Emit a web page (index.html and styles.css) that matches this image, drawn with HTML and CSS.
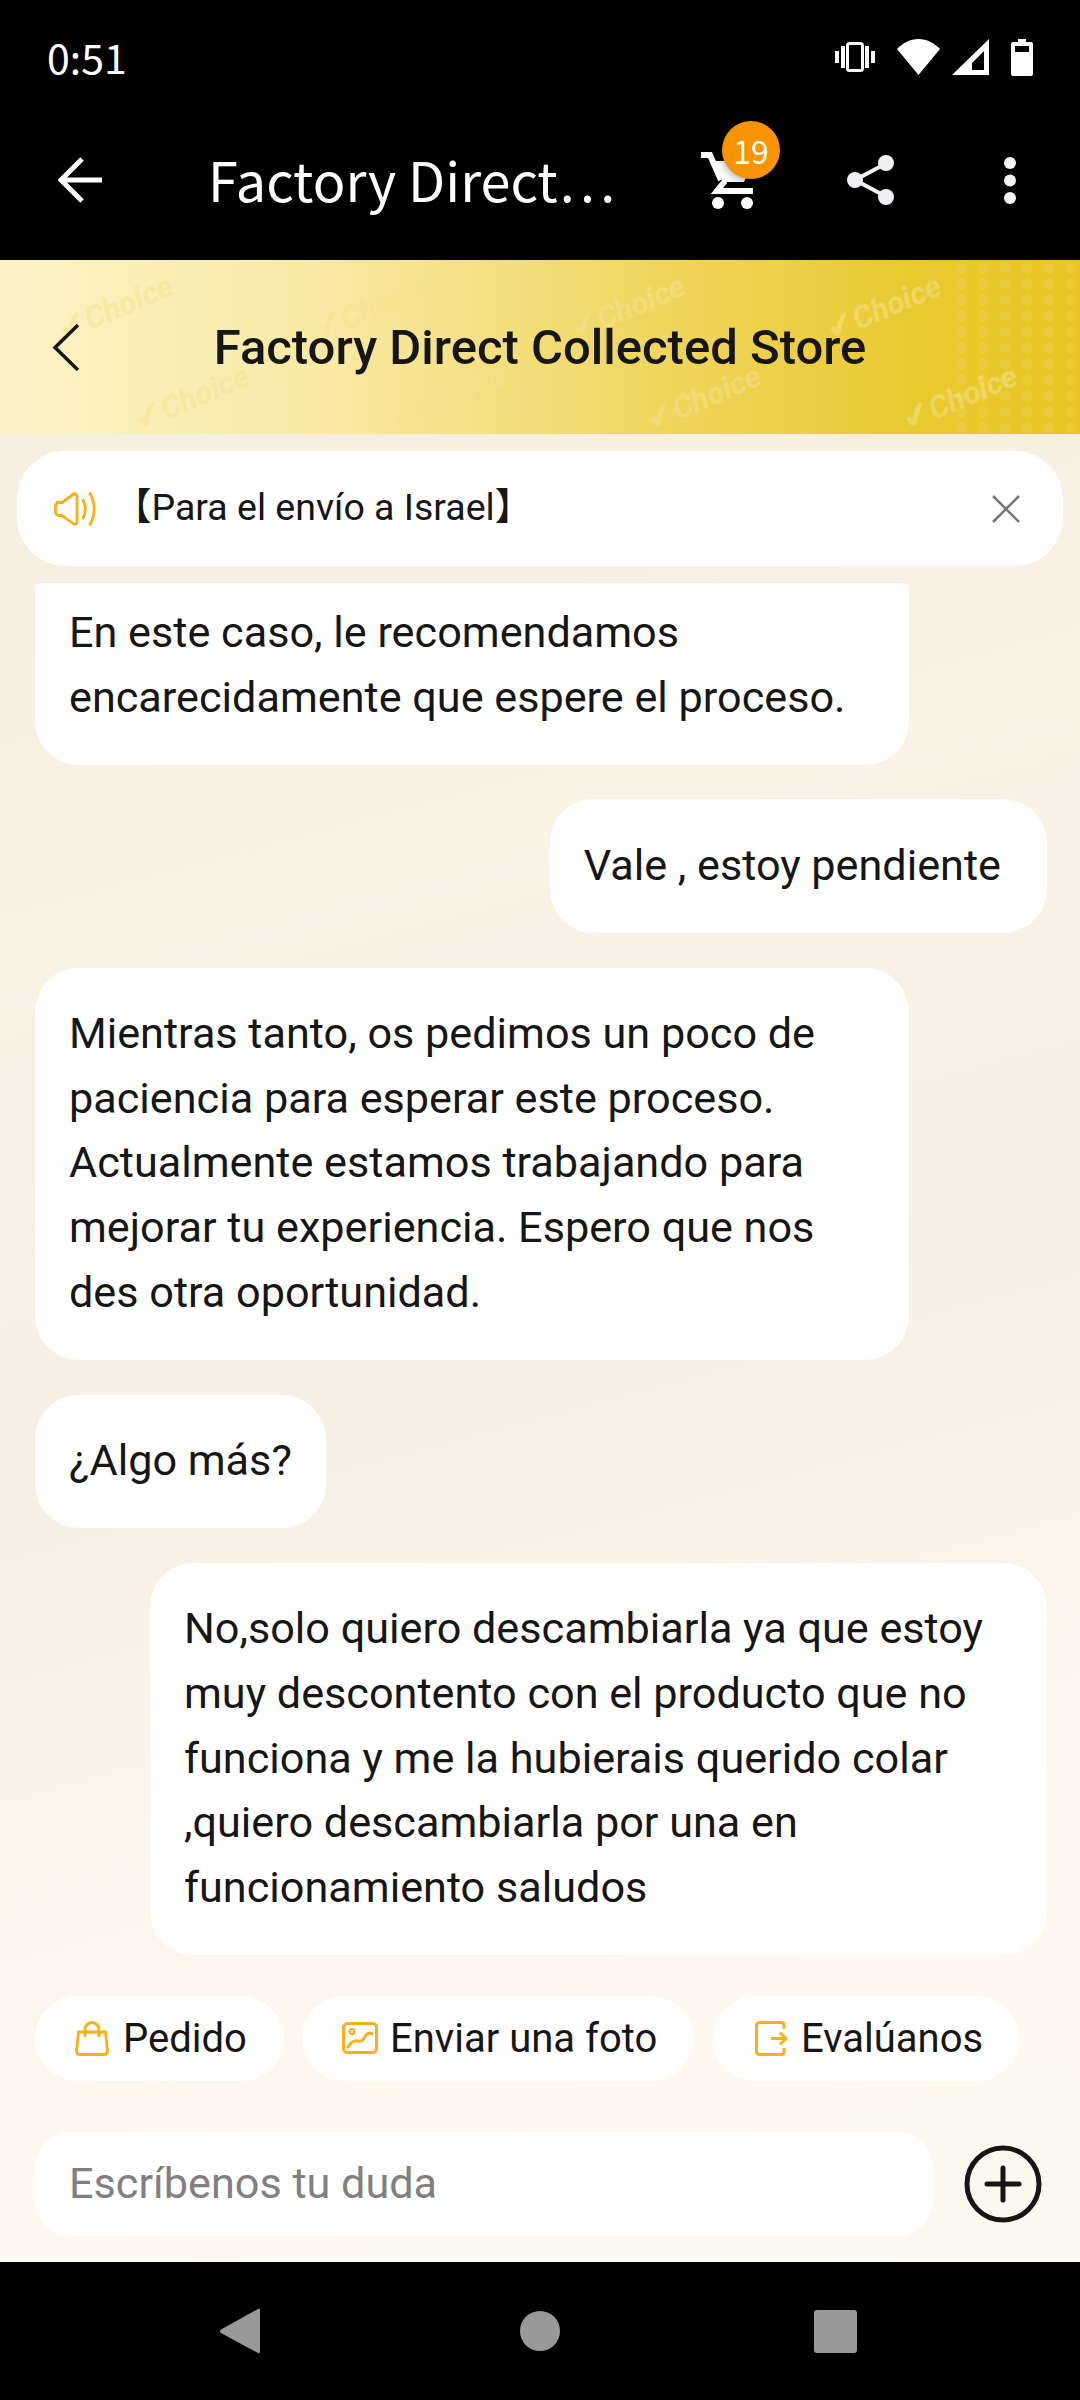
FILE: index.html
```html
<!DOCTYPE html>
<html lang="es">
<head>
<meta charset="utf-8">
<title>Factory Direct Collected Store</title>
<link rel="stylesheet" href="styles.css">
</head>
<body>
<div class="app">
  <header class="top">
    <div class="status">
      <span class="time">0:51</span>
      <div class="status-icons">
        <svg class="ic-vib" viewBox="0 0 40 30"><path fill="#fff" d="M0 9h4v12H0zM6 4h4v22H6zM30 4h4v22h-4zM36 9h4v12h-4z"/><rect x="12.500" y="1.500" width="15" height="27" rx="2" fill="none" stroke="#fff" stroke-width="3"/></svg>
        <svg class="ic-wifi" viewBox="0 0 43 36"><path fill="#fff" d="M21.500 36 0 10C6 4 13 0 21.500 0S37 4 43 10z"/></svg>
        <svg class="ic-signal" viewBox="0 0 37 36"><path fill="#fff" fill-rule="evenodd" d="M0 36 37 0v36zM20 31h12V12L20 24z"/></svg>
        <svg class="ic-batt" viewBox="0 0 22 37"><path fill="#fff" fill-rule="evenodd" d="M7 0h8v3h5a2 2 0 0 1 2 2v30a2 2 0 0 1-2 2H2a2 2 0 0 1-2-2V5a2 2 0 0 1 2-2h5zM4 7v6h14V7z"/></svg>
      </div>
    </div>
    <div class="toolbar">
      <svg class="ic-arrow" viewBox="0 0 46 46"><path d="M44 23H4M24 2 3 23l21 21" fill="none" stroke="#fff" stroke-width="5"/></svg>
      <span class="tb-title">Factory Direct…</span>
      <div class="cart">
        <svg class="ic-cart" viewBox="0 0 62 60"><path d="M0 5h9l11 25" fill="none" stroke="#fff" stroke-width="6"/><path fill="#fff" d="M14 11h38l-9 21H22z"/><path d="M24 31 16 41h36" fill="none" stroke="#fff" stroke-width="6"/><circle cx="17" cy="53" r="6" fill="#fff"/><circle cx="46" cy="53" r="6" fill="#fff"/></svg>
        <span class="badge">19</span>
      </div>
      <svg class="ic-share" viewBox="0 0 48 50"><path d="M40 8 8 25l32 17" fill="none" stroke="#f0eff2" stroke-width="4"/><circle cx="39" cy="8" r="8" fill="#f0eff2"/><circle cx="8" cy="25" r="8" fill="#f0eff2"/><circle cx="39" cy="42" r="8" fill="#f0eff2"/></svg>
      <svg class="ic-more" viewBox="0 0 12 47"><circle cx="6" cy="6" r="6" fill="#f5f5f5"/><circle cx="6" cy="23.500" r="6" fill="#f5f5f5"/><circle cx="6" cy="41" r="6" fill="#f5f5f5"/></svg>
    </div>
  </header>

  <section class="banner">
    <div class="marks">
      <div class="marks-row"><span class="mark"><b class="tick">✔</b>Choice</span><span class="mark"><b class="tick">✔</b>Choice</span><span class="mark"><b class="tick">✔</b>Choice</span><span class="mark"><b class="tick">✔</b>Choice</span></div>
      <div class="marks-row marks-row-b"><span class="mark"><b class="tick">✔</b>Choice</span><span class="mark"><b class="tick">✔</b>Choice</span><span class="mark"><b class="tick">✔</b>Choice</span><span class="mark"><b class="tick">✔</b>Choice</span></div>
    </div>
    <div class="dots"></div>
    <svg class="ic-chev" viewBox="0 0 28 47"><path d="M26 1 3 23.500 26 46" fill="none" stroke="#161616" stroke-width="3.500"/></svg>
    <h1 class="store">Factory Direct Collected Store</h1>
  </section>

  <main class="chat">
    <div class="notice">
      <svg class="ic-speaker" viewBox="0 0 42 34"><path d="M3 10.500h5L19 2.500c2-1.500 4-.5 4 2v25c0 2.500-2 3.500-4 2L8 23.500H5c-2 0-3.500-1.500-3.500-3.500v-6c0-2 1.500-3.500 3.500-3.500z" fill="none" stroke="#fbae17" stroke-width="2.800" stroke-linejoin="round"/><path d="M29 8c3 5.500 3 12.500 0 18M36 1.500c5.500 9 5.500 22 0 31" fill="none" stroke="#fbae17" stroke-width="2.800" stroke-linecap="round"/></svg>
      <span class="notice-text">【Para el envío a Israel】</span>
      <svg class="ic-close" viewBox="0 0 28 28"><path d="M1 1l26 26M27 1 1 27" stroke="#777" stroke-width="2.500" fill="none"/></svg>
    </div>

    <div class="messages">
      <p class="msg msg-in msg-clipped">En este caso, le recomendamos encarecidamente que espere el proceso.</p>
      <p class="msg msg-out msg-short">Vale , estoy pendiente</p>
      <p class="msg msg-in">Mientras tanto, os pedimos un poco de paciencia para esperar este proceso. Actualmente estamos trabajando para mejorar tu experiencia. Espero que nos des otra oportunidad.</p>
      <p class="msg msg-in">¿Algo más?</p>
      <p class="msg msg-out msg-wide">No,solo quiero descambiarla ya que estoy muy descontento con el producto que no funciona y me la hubierais querido colar ,quiero descambiarla por una en funcionamiento saludos</p>
    </div>

    <div class="chips">
      <div class="chip chip-a">
        <svg class="ic-chip" viewBox="0 0 34 35"><path d="M3.500 11h27l2 19c0 2.500-1.500 3.500-3.500 3.500H5c-2 0-3.500-1-3.500-3.500z M10 16V9c0-4 3-7.500 7-7.500s7 3.500 7 7.500v7" fill="none" stroke="#fbae17" stroke-width="2.800" stroke-linejoin="round"/></svg>
        <span>Pedido</span>
      </div>
      <div class="chip chip-b">
        <svg class="ic-chip ic-photo" viewBox="0 0 36 32"><rect x="1.500" y="1.500" width="33" height="29" rx="4" fill="none" stroke="#fbae17" stroke-width="3"/><circle cx="10" cy="9.500" r="2.500" fill="none" stroke="#fbae17" stroke-width="2.200"/><path d="M6 25c3-5 6-7 10-6 5 1 6-3 8-6 2-2 4-2 6-1" fill="none" stroke="#fbae17" stroke-width="3" stroke-linecap="round"/></svg>
        <span>Enviar una foto</span>
      </div>
      <div class="chip chip-c">
        <svg class="ic-chip ic-out" viewBox="0 0 33 35"><path d="M29 8V4.500c0-2-1-3-3-3H5c-2 0-3.500 1-3.500 3v26c0 2 1.500 3 3.500 3h21c2 0 3-1 3-3V27" fill="none" stroke="#fbae17" stroke-width="3"/><path d="M16 17.500h15M25 11.500l6 6-6 6" fill="none" stroke="#fbae17" stroke-width="3"/></svg>
        <span>Evalúanos</span>
      </div>
    </div>

    <div class="composer">
      <div class="input">Escríbenos tu duda</div>
      <svg class="ic-plus" viewBox="0 0 78 78"><circle cx="39" cy="39" r="36" fill="none" stroke="#161616" stroke-width="5"/><path d="M23 39h32M39 23v32" stroke="#161616" stroke-width="5" fill="none" stroke-linecap="round"/></svg>
    </div>
  </main>

  <nav class="nav">
    <svg class="nav-back" viewBox="0 0 40 46"><path d="M38 1c1-.5 2 0 2 1v42c0 1-1 1.500-2 1L1 25c-1.500-1-1.500-2 0-3.500z" fill="#999"/></svg>
    <svg class="nav-home" viewBox="0 0 40 40"><circle cx="20" cy="20" r="20" fill="#999"/></svg>
    <svg class="nav-recent" viewBox="0 0 43 43"><rect width="43" height="43" rx="3" fill="#999"/></svg>
  </nav>
</div>
</body>
</html>
```

FILE: styles.css
```css
* { box-sizing: border-box; }
html, body { margin: 0; padding: 0; }
body { width: 1080px; height: 2400px; overflow: hidden; background: #000; font-family: Roboto, "Noto Sans CJK SC", sans-serif; }
svg { display: block; flex: none; }

.app { width: 1080px; height: 2400px; display: flex; flex-direction: column; }

/* top black area */
.top { height: 260px; background: #000; color: #fff; flex: none; }
.status { height: 100px; padding: 12px 47px 0; display: flex; align-items: center; justify-content: space-between; }
.time { font: 400 41px/1 "Noto Sans CJK SC", sans-serif; }
.status-icons { display: flex; align-items: center; margin-top: 2px; }
.ic-vib { width: 40px; height: 30px; margin-right: 22px; }
.ic-wifi { width: 43px; height: 36px; margin-right: 12px; }
.ic-signal { width: 37px; height: 36px; margin-right: 22px; }
.ic-batt { width: 22px; height: 37px; }

.toolbar { height: 160px; padding-left: 58px; display: flex; align-items: center; }
.ic-arrow { width: 46px; height: 46px; }
.tb-title { width: 477px; margin: -3px 0 0 104px; font: 400 54px/1 "Noto Sans CJK SC", sans-serif; white-space: nowrap; }
.cart { position: relative; width: 62px; height: 60px; margin-left: 16px; }
.ic-cart { width: 62px; height: 60px; }
.badge { position: absolute; left: 21px; top: -29px; width: 58px; height: 58px; border-radius: 50%; background: #f79400; color: #fff; font: 400 32px/58px "Noto Sans CJK SC", sans-serif; text-align: center; box-shadow: 0 2px 10px rgba(0, 0, 0, .35); }
.ic-share { width: 48px; height: 50px; margin-left: 84px; }
.ic-more { width: 12px; height: 47px; margin-left: 109px; }

/* gold banner */
.banner { position: relative; height: 174px; flex: none; display: flex; align-items: center; justify-content: center; background: linear-gradient(90deg, #fdf3c6 0%, #f8e9a4 30%, #efd55c 62%, #e9c92f 85%, #e8c525 100%); }
.marks { position: absolute; inset: 0; color: #f6e291; opacity: .5; }
.marks-row { display: flex; gap: 131px; padding: 28px 0 0 54px; }
.marks-row-b { padding: 0 0 0 130px; margin-top: 54px; }
.mark { flex: none; width: 125px; height: 36px; font: italic 700 31px/36px Roboto, sans-serif; transform: rotate(-23deg); white-space: nowrap; }
.tick { font: 700 34px/36px "DejaVu Sans", sans-serif; }
.dots { position: absolute; right: 0; top: 0; bottom: 0; width: 130px; opacity: .12; background: radial-gradient(circle, #f7ecb0 5px, transparent 6px) 0 0 / 22px 16px; }
.ic-chev { position: absolute; left: 52px; top: 64px; width: 28px; height: 47px; }
.store { position: relative; margin: 0; font: 500 49px/1 Roboto, sans-serif; color: #161616; }

/* chat area */
.chat { flex: 1; min-height: 0; padding: 17px 17px 0; display: flex; flex-direction: column; background: linear-gradient(165deg, #f5efe0 0%, #faf2e5 25%, #f7efe3 50%, #fdf9f0 85%, #fbf8ee 100%); }
.notice { height: 115px; border-radius: 48px; background: #fff; display: flex; align-items: center; padding-left: 37px; flex: none; }
.ic-speaker { width: 42px; height: 34px; }
.notice-text { flex: 1; margin: 0 0 4px 18px; font-size: 37.5px; line-height: 44px; color: #161616; white-space: nowrap; }
.ic-close { width: 28px; height: 28px; margin-right: 43px; }

.messages { margin-top: 17px; padding: 0 16px 0 18px; display: flex; flex-direction: column; gap: 34.75px; flex: none; }
.msg { margin: 0; padding: 34.5px 34px; border-radius: 44px; background: #fff; font-size: 43.2px; line-height: 64.6px; color: #161616; }
.msg-in { align-self: flex-start; max-width: 874px; }
.msg-out { align-self: flex-end; max-width: 897px; }
.msg-clipped { width: 874px; padding-top: 18px; border-radius: 6px 6px 44px 44px; }
.msg-short { padding-right: 46px; }
.msg-wide { width: 897px; }

.chips { display: flex; margin-top: 41px; padding-left: 18px; flex: none; }
.chip { height: 85px; border-radius: 43px; background: #fff; display: flex; align-items: center; font-size: 40px; color: #161616; white-space: nowrap; }
.chip-a { width: 249px; padding-left: 40px; margin-right: 18px; }
.chip-b { width: 391px; padding-left: 40px; margin-right: 20px; }
.chip-c { width: 306px; padding-left: 42px; }
.ic-chip { width: 34px; height: 35px; margin-right: 14px; }
.ic-photo { width: 36px; height: 32px; margin-right: 12px; }
.ic-out { width: 33px; height: 35px; margin-right: 13px; }

.composer { display: flex; align-items: center; margin-top: 51px; padding-left: 18px; flex: none; }
.input { width: 898px; height: 104px; border-radius: 36px; background: #fff; padding-left: 34px; font-size: 43.2px; line-height: 104px; color: #808080; }
.ic-plus { width: 78px; height: 78px; margin-left: 31px; }

/* nav */
.nav { height: 138px; flex: none; background: #000; display: flex; align-items: center; padding-left: 220px; }
.nav-back { width: 40px; height: 46px; margin-right: 260px; }
.nav-home { width: 40px; height: 40px; margin-right: 254px; }
.nav-recent { width: 43px; height: 43px; }
```
